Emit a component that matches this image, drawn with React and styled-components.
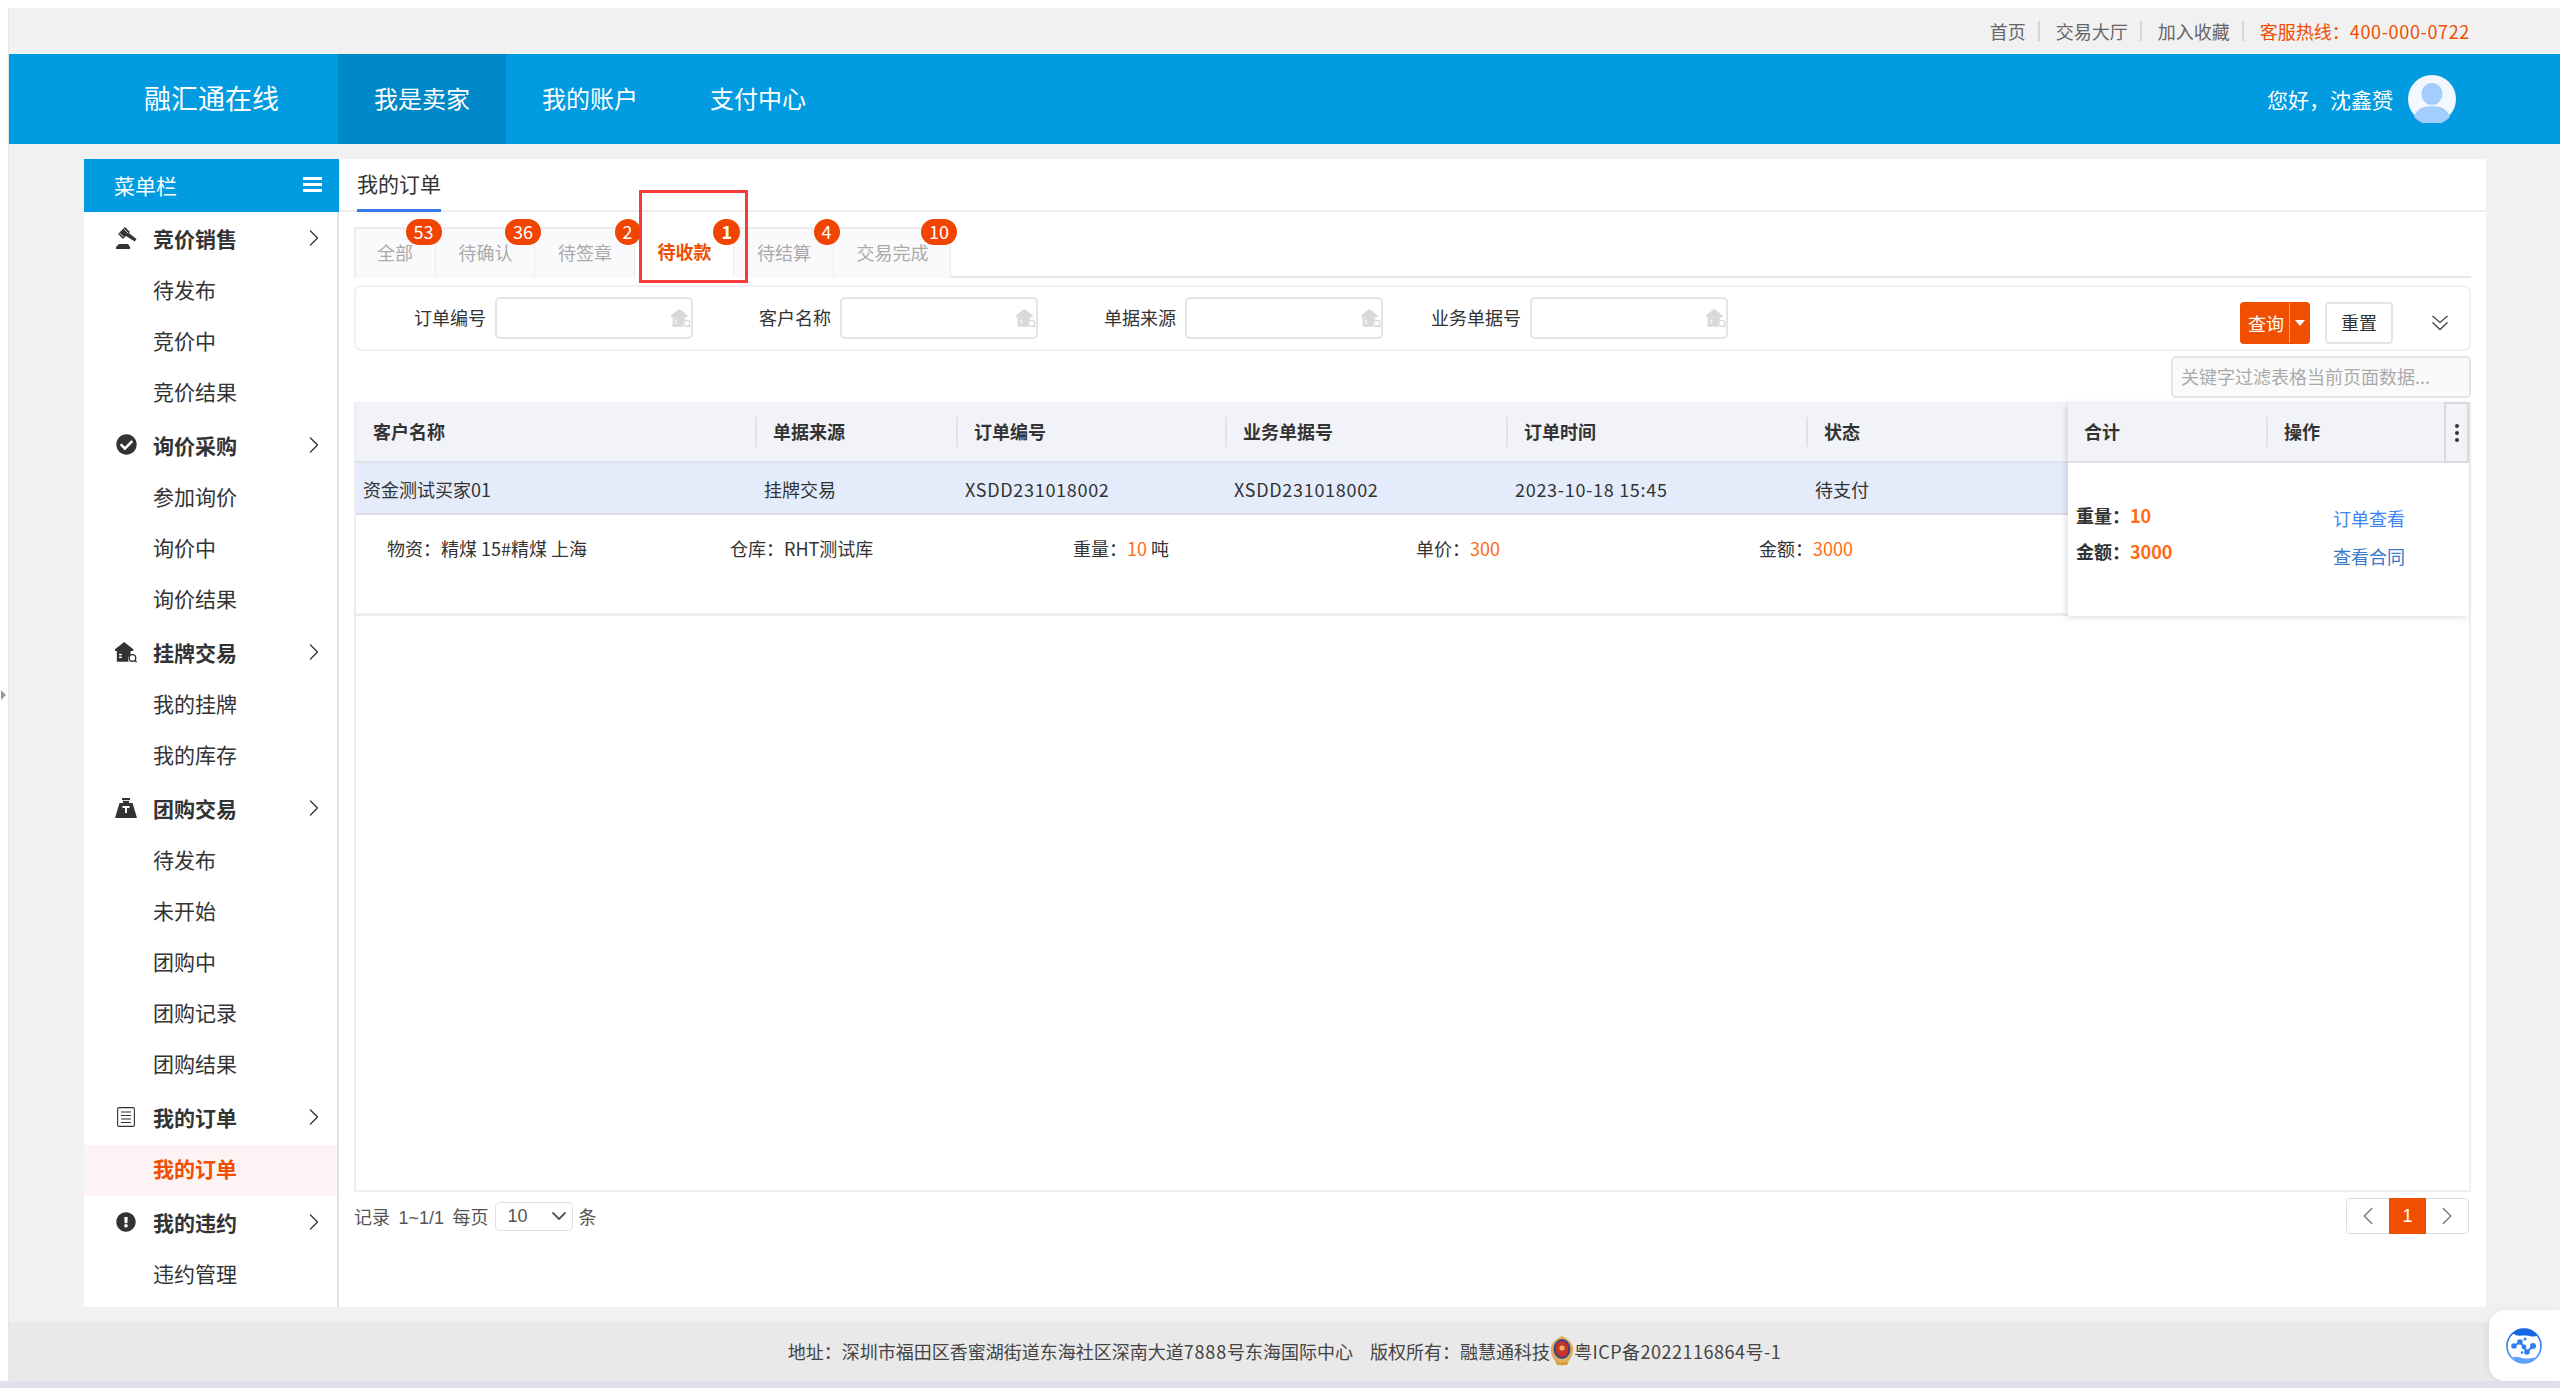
import React from "react";
import styled, { createGlobalStyle } from "styled-components";
import { FaCheckCircle, FaExclamationCircle } from "react-icons/fa";
import { ChevronRight, ChevronLeft, ChevronDown } from "lucide-react";

const GlobalStyle = createGlobalStyle`
  html, body {
    margin: 0;
    padding: 0;
    background: #fff;
    overflow: hidden;
  }
  body {
    font-family: "Noto Sans CJK SC", "Liberation Sans", sans-serif;
    font-size: 18px;
    color: #333;
  }
  * { box-sizing: border-box; }
`;

const Page = styled.div`
  position: relative;
  width: 2560px;
  height: 1388px;
  padding: 8px 0 0 8px;
  background: #fff;
  overflow: hidden;
`;

const Shell = styled.div`
  height: 1373px;
  background: #f1f1f1;
  border-left: 1px solid #e6e6e6;
  display: flex;
  flex-direction: column;
`;

const BottomStrip = styled.div`
  height: 7px;
  margin-left: -8px;
  background: #dfe1ec;
`;

const EdgeArrow = styled.span`
  position: absolute;
  left: 1px;
  top: 690px;
  border-left: 5px solid #999;
  border-top: 5px solid transparent;
  border-bottom: 5px solid transparent;
`;

const TopBar = styled.div`
  height: 46px;
  padding-right: 90px;
  display: flex;
  align-items: center;
  justify-content: flex-end;
  color: #666;
`;

const TopLink = styled.span`
  line-height: 20px;
  padding-right: 12px;
  margin-right: 16px;
  border-right: 2px solid #d4d4d4;
`;

const Hotline = styled.span`
  color: #f04e00;
`;

const Wide = styled.span`
  letter-spacing: ${(p) => p.$gap || "0.65px"};
`;

const Header = styled.header`
  height: 90px;
  background: #009be1;
  display: flex;
  align-items: stretch;
  color: #fff;
  padding-right: 104px;
`;

const Logo = styled.div`
  width: 329px;
  padding: 0 0 3px 135px;
  font-size: 27px;
  display: flex;
  align-items: center;
`;

const NavItem = styled.div`
  padding: 0 36px 3px;
  font-size: 24px;
  display: flex;
  align-items: center;
  background: ${(p) => (p.$active ? "#0089c8" : "transparent")};
`;

const UserBox = styled.div`
  margin-left: auto;
  display: flex;
  align-items: center;
  gap: 15px;
  font-size: 21px;
`;

const Workspace = styled.div`
  width: 2402px;
  height: 1148px;
  margin: 15px 0 15px 75px;
  display: flex;
`;

const Sidebar = styled.aside`
  width: 255px;
  flex: none;
  background: #fff;
  border-right: 2px solid #e2e2e2;
`;

const SidebarTitle = styled.div`
  height: 53px;
  margin-right: -2px;
  background: #009be1;
  color: #fff;
  font-size: 21px;
  padding: 0 17px 2px 30px;
  display: flex;
  align-items: center;
  justify-content: space-between;
`;

const Burger = styled.span`
  width: 19px;
  height: 15px;
  border-top: 3px solid #fff;
  border-bottom: 3px solid #fff;
  position: relative;
  &::after {
    content: "";
    position: absolute;
    left: 0;
    right: 0;
    top: 3px;
    height: 3px;
    background: #fff;
  }
`;

const GroupRow = styled.div`
  height: 54px;
  padding: 0 9px 3px 31px;
  display: flex;
  align-items: center;
  font-size: 21px;
  font-weight: 700;
  color: #333;
`;

const GroupIcon = styled.span`
  width: 22px;
  height: 24px;
  margin-right: 16px;
  display: flex;
  align-items: center;
  justify-content: center;
  color: #333;
`;

const GroupLabel = styled.span`
  flex: 1;
`;

const ChildRow = styled.div`
  height: 51px;
  padding: 0 0 5px 69px;
  display: flex;
  align-items: center;
  font-size: 21px;
  font-weight: ${(p) => (p.$active ? 700 : 400)};
  color: ${(p) => (p.$active ? "#f04e00" : "#333")};
  background: ${(p) => (p.$active ? "#fdf2f4" : "transparent")};
`;

const Content = styled.main`
  flex: 1;
  background: #fff;
  min-width: 0;
`;

const TitleBar = styled.div`
  height: 53px;
  padding-left: 18px;
  border-bottom: 2px solid #eee;
  display: flex;
`;

const PageTitle = styled.div`
  height: 53px;
  font-size: 21px;
  line-height: 48px;
  color: #333;
  border-bottom: 3px solid #3b78f0;
`;

const ContentBody = styled.div`
  padding: 0 15px;
`;

const TabStrip = styled.div`
  position: relative;
  margin-top: 15px;
  height: 51px;
  display: flex;
  border-bottom: 2px solid #e8e8ec;
`;

const Tab = styled.div`
  position: relative;
  height: 51px;
  padding: 0 21.5px 4px ${(p) => (p.$first ? "21px" : "23px")};
  display: flex;
  align-items: center;
  border-top: 2px solid #ececee;
  border-right: 1px solid #ececee;
  border-left: ${(p) => (p.$first ? "2px solid #ececee" : "none")};
  background: ${(p) => (p.$active ? "#fff" : "#fafafc")};
  color: ${(p) => (p.$active ? "#f04e00" : "#aaa")};
  font-weight: ${(p) => (p.$active ? 700 : 400)};
  ${(p) => p.$active && "border-bottom: 2px solid #fff; border-top-color: #fff;"}
`;

const Badge = styled.span`
  position: absolute;
  top: -10px;
  right: -7px;
  z-index: 2;
  height: 26px;
  min-width: 26px;
  padding: 0 8px;
  border-radius: 13px;
  background: #f04400;
  color: #fff;
  font-size: 18px;
  line-height: 25px;
  text-align: center;
`;

const Annotation = styled.div`
  position: absolute;
  left: 285px;
  top: -37px;
  width: 109px;
  height: 93px;
  border: 3px solid #f83a3a;
  z-index: 3;
`;

const FilterPanel = styled.div`
  margin-top: 7px;
  height: 66px;
  padding-left: 58px;
  padding-right: 20px;
  border: 2px solid #f0f0f0;
  border-radius: 7px;
  display: flex;
  align-items: center;
  gap: 66px;
`;

const FilterItem = styled.label`
  display: flex;
  align-items: center;
  gap: 9px;
`;

const FilterLabel = styled.span`
  width: 72px;
  padding-bottom: 2px;
  display: flex;
  justify-content: flex-end;
  white-space: nowrap;
`;

const FilterBox = styled.div`
  width: 198px;
  height: 42px;
  border: 2px solid #e2e4ec;
  border-radius: 5px;
  padding-right: 0;
  display: flex;
  align-items: center;
  justify-content: flex-end;
`;

const ButtonGroup = styled.div`
  margin-left: auto;
  margin-top: 10px;
  display: flex;
  align-items: center;
  gap: 15px;
`;

const QueryButton = styled.div`
  width: 70px;
  height: 42px;
  border-radius: 4px;
  background: #f04e00;
  color: #fff;
  display: flex;
  align-items: center;
`;

const QueryText = styled.span`
  width: 50px;
  padding-left: 3px;
  text-align: center;
  border-right: 1px solid #f8a27a;
  line-height: 40px;
`;

const Caret = styled.span`
  margin-left: 5px;
  border-top: 6px solid #fff;
  border-left: 5px solid transparent;
  border-right: 5px solid transparent;
`;

const ResetButton = styled.div`
  width: 68px;
  height: 42px;
  padding-bottom: 2px;
  border: 2px solid #e2e4ec;
  border-radius: 4px;
  display: flex;
  align-items: center;
  justify-content: center;
`;

const MoreIcon = styled.svg`
  margin-left: 23px;
`;

const SearchRow = styled.div`
  margin-top: 5px;
  display: flex;
  justify-content: flex-end;
`;

const SearchBox = styled.div`
  width: 300px;
  height: 42px;
  padding-left: 8px;
  background: #fafafa;
  border: 2px solid #e2e4ec;
  border-radius: 5px;
  color: #aaa;
  line-height: 36px;
  white-space: nowrap;
  overflow: hidden;
`;

const TableBox = styled.div`
  margin-top: 4px;
  height: 790px;
  display: flex;
  align-items: flex-start;
  border-left: 2px solid #eee;
  border-right: 2px solid #eee;
  border-bottom: 2px solid #eee;
`;

const MainTable = styled.div`
  width: 1712px;
  flex: none;
`;

const HeadRow = styled.div`
  height: 61px;
  background: #f2f3f8;
  border-top: 1px solid #eee;
  border-bottom: 2px solid #dfe1ea;
  display: grid;
  grid-template-columns: ${(p) => p.$cols};
  align-items: center;
`;

const HeadCell = styled.div`
  height: 30px;
  line-height: 28px;
  padding-left: ${(p) => (p.$first ? "17px" : "16px")};
  font-weight: 700;
  color: #333;
  border-right: ${(p) => (p.$last ? "none" : "2px solid #dfe1e6")};
`;

const DataRow = styled.div`
  height: 52px;
  padding-top: 1px;
  background: #e4ecfb;
  border-bottom: 2px solid #dcdfe9;
  display: grid;
  grid-template-columns: ${(p) => p.$cols};
  align-items: center;
`;

const DataCell = styled.div`
  padding-left: 7px;
  letter-spacing: ${(p) => (p.$code ? "0.7px" : "0")};
`;

const DetailRow = styled.div`
  height: 101px;
  padding: 20px 0 0 31px;
  border-bottom: 3px solid #eee;
  display: grid;
  grid-template-columns: repeat(5, 343px);
  align-items: start;
`;

const Orange = styled.span`
  color: #ff6a13;
  font-weight: ${(p) => (p.$bold ? 700 : 400)};
`;

const FrozenPanel = styled.div`
  flex: 1;
  position: relative;
  background: #fff;
  box-shadow: -2px 2px 6px rgba(0, 0, 0, 0.12);
`;

const KebabCell = styled.div`
  position: absolute;
  right: 0;
  top: 0;
  width: 25px;
  height: 61px;
  border: 2px solid #d8dae0;
  background: #f2f3f8;
  display: flex;
  flex-direction: column;
  align-items: center;
  justify-content: center;
  gap: 3px;
`;

const KebabDot = styled.i`
  width: 4px;
  height: 4px;
  border-radius: 50%;
  background: #333;
`;

const FrozenBody = styled.div`
  height: 153px;
  display: grid;
  grid-template-columns: 200px 1fr;
  align-items: center;
`;

const TotalCell = styled.div`
  padding: 0 0 14px 8px;
  font-weight: 700;
  line-height: 36px;
`;

const ActionCell = styled.div`
  padding-left: 65px;
  padding-bottom: 6px;
  line-height: 38px;
`;

const ActionLink = styled.div`
  color: ${(p) => p.$color};
`;

const PagerRow = styled.div`
  height: 45px;
  padding: 2px 2px 0 0;
  display: flex;
  align-items: center;
  justify-content: space-between;
`;

const PagerInfo = styled.div`
  display: flex;
  align-items: center;
  gap: 6px;
  color: #555;
  word-spacing: 3.5px;
  font-family: "Liberation Sans", "Noto Sans CJK SC", sans-serif;
`;

const PageSize = styled.div`
  width: 78px;
  height: 29px;
  margin-top: 1px;
  padding: 0 1px 0 12px;
  border: 1px solid #dcdfe9;
  border-radius: 5px;
  display: flex;
  align-items: center;
  justify-content: space-between;
`;

const Pager = styled.div`
  width: 123px;
  height: 36px;
  margin-top: 1px;
  border: 1px solid #ddd;
  border-radius: 4px;
  display: flex;
  align-items: stretch;
  justify-content: space-between;
`;

const PagerArrow = styled.span`
  width: 42px;
  display: flex;
  align-items: center;
  justify-content: center;
  color: #777;
`;

const PagerCurrent = styled.span`
  width: 37px;
  margin: -1px 0;
  background: #f04e00;
  color: #fff;
  font-family: "Liberation Sans", sans-serif;
  display: flex;
  align-items: center;
  justify-content: center;
`;

const Footer = styled.footer`
  height: 59px;
  padding-bottom: 2px;
  background: #e9e9e9;
  color: #444;
  display: flex;
  align-items: center;
  justify-content: center;
`;

const FooterBlock = styled.span`
  margin-right: 17px;
`;

const FloatBadge = styled.div`
  position: absolute;
  right: 0;
  top: 1310px;
  width: 71px;
  height: 71px;
  background: #fff;
  border-radius: 16px 0 0 16px;
  box-shadow: -2px 0 6px rgba(0, 0, 0, 0.06);
  padding-left: 17px;
  display: flex;
  align-items: center;
`;

const Avatar = () => (
  <svg width="48" height="48" viewBox="0 0 48 48">
    <circle cx="24" cy="24" r="24" fill="#f3f7fe" />
    <ellipse cx="24" cy="19" rx="10.5" ry="11" fill="#a2cdfd" />
    <path d="M6 42c2-8 10-11 18-11s16 3 18 11a24 24 0 0 1-36 0z" fill="#a2cdfd" />
  </svg>
);

const GavelIcon = () => (
  <svg width="21" height="22" viewBox="0 0 21 22" fill="#333">
    <path d="M9 0l5 5-7 7-5-5z" />
    <path d="M11.200 4.800 20.500 12l-1.700 2.500-10-6.200z" />
    <path d="M3 17h9l2 3v2H0v-2z" />
    <path d="M7.800 1.800l4.400 4.400M3.500 6l4.400 4.400" stroke="#fff" strokeWidth="0.8" />
  </svg>
);

const HouseSearch = ({ size = 22, color = "#333" }) => (
  <svg width={size} height={size} viewBox="0 0 24 24">
    <path d="M10 1 20 9v2H0V9z" fill={color} />
    <path d="M2 11h15v3.5a6 6 0 0 0-2 8H2z" fill={color} />
    <rect x="4.5" y="14" width="3" height="1.6" fill="#fff" />
    <rect x="4.5" y="17" width="3" height="1.6" fill="#fff" />
    <circle cx="19" cy="18.5" r="3.6" fill="none" stroke={color} strokeWidth="1.5" />
    <path d="m21.5 21 2 2" stroke={color} strokeWidth="1.5" />
  </svg>
);

const WeightIcon = () => (
  <svg width="22" height="20" viewBox="0 0 22 20">
    <rect x="7" y="0" width="8" height="2.2" fill="#333" />
    <path d="M8 3h6v2h3.5L22 20H0L4.5 5H8z" fill="#333" />
    <path d="M7.500 8h7v2h-2.500v5h-2v-5H7.500z" fill="#fff" />
  </svg>
);

const ListIcon = () => (
  <svg width="18" height="20" viewBox="0 0 18 20" fill="none" stroke="#333" strokeWidth="1.1">
    <rect x="0.6" y="0.6" width="16.8" height="18.8" rx="1.5" />
    <path d="M4 5h10M4 8.500h10M4 12h10M4 15.500h10" />
  </svg>
);

const PoliceEmblem = () => (
  <svg width="24" height="30" viewBox="0 0 24 30">
    <path d="M12 0c2 1 9 4 11 11 1 8-3 15-11 19C4 26 0 19 1 11 3 4 10 1 12 0z" fill="#e0ad5a" />
    <ellipse cx="12" cy="13" rx="8.5" ry="10" fill="#30468c" />
    <ellipse cx="12" cy="13" rx="6.5" ry="8" fill="#c8342a" />
    <circle cx="12" cy="12" r="2.6" fill="#e7bd5c" />
    <path d="M5 25c4 2 10 2 14 0l-2 4H7z" fill="#d99a3d" />
  </svg>
);

const AssistLogo = () => (
  <svg width="36" height="36" viewBox="0 0 36 36">
    <defs>
      <linearGradient id="assistRing" x1="0" y1="0" x2="0" y2="1">
        <stop offset="0" stopColor="#0f5fe0" />
        <stop offset="1" stopColor="#5aa2fa" />
      </linearGradient>
    </defs>
    <circle cx="18" cy="18" r="17" fill="#fff" stroke="url(#assistRing)" strokeWidth="1.6" />
    <path d="M7 5.500C12 0 24-1 31 7c-3 3-6 1-10 .5C16 7 11 9 7 5.500z" fill="#1466e6" />
    <path d="M6 30c4-3 8 0 13 .5 4 .4 8-1 10.500-1C25 37 12 37 6 30z" fill="#5aa2fa" />
    <g fill="#2f7ff0">
      <circle cx="8" cy="18" r="2.800" />
      <circle cx="14" cy="14" r="2.800" />
      <circle cx="18" cy="19" r="2.400" />
      <circle cx="21" cy="24" r="2.800" />
      <circle cx="27" cy="18" r="3" />
      <circle cx="19" cy="11" r="1.500" />
      <circle cx="16" cy="24.500" r="1.300" />
    </g>
    <path d="M8 18l6-4 4 5 3 5 6-6" fill="none" stroke="#2f7ff0" strokeWidth="2" />
  </svg>
);

const menu = [
  { title: "竞价销售", icon: <GavelIcon />, items: ["待发布", "竞价中", "竞价结果"] },
  { title: "询价采购", icon: <FaCheckCircle size={21} />, items: ["参加询价", "询价中", "询价结果"] },
  { title: "挂牌交易", icon: <HouseSearch />, items: ["我的挂牌", "我的库存"] },
  { title: "团购交易", icon: <WeightIcon />, items: ["待发布", "未开始", "团购中", "团购记录", "团购结果"] },
  { title: "我的订单", icon: <ListIcon />, items: ["我的订单"], activeItem: "我的订单" },
  { title: "我的违约", icon: <FaExclamationCircle size={20} />, items: ["违约管理"] },
];

const tabs = [
  { label: "全部", count: 53 },
  { label: "待确认", count: 36 },
  { label: "待签章", count: 2 },
  { label: "待收款", count: 1, active: true },
  { label: "待结算", count: 4 },
  { label: "交易完成", count: 10 },
];

const filters = ["订单编号", "客户名称", "单据来源", "业务单据号"];
const mainCols = "401px 201px 269px 281px 300px 260px";
const headers = ["客户名称", "单据来源", "订单编号", "业务单据号", "订单时间", "状态"];
const rowCells = [
  { text: "资金测试买家01" },
  { text: "挂牌交易" },
  { text: "XSDD231018002", code: true },
  { text: "XSDD231018002", code: true },
  { text: "2023-10-18 15:45", code: true },
  { text: "待支付" },
];

const App = () => (
  <Page>
    <GlobalStyle />
    <EdgeArrow />
    <Shell>
      <TopBar>
        <TopLink>首页</TopLink>
        <TopLink>交易大厅</TopLink>
        <TopLink>加入收藏</TopLink>
        <Hotline>
          客服热线：<Wide>400-000-0722</Wide>
        </Hotline>
      </TopBar>
      <Header>
        <Logo>融汇通在线</Logo>
        <NavItem $active>我是卖家</NavItem>
        <NavItem>我的账户</NavItem>
        <NavItem>支付中心</NavItem>
        <UserBox>
          您好，沈鑫赟
          <Avatar />
        </UserBox>
      </Header>
      <Workspace>
        <Sidebar>
          <SidebarTitle>
            菜单栏
            <Burger />
          </SidebarTitle>
          {menu.map((group) => (
            <div key={group.title}>
              <GroupRow>
                <GroupIcon>{group.icon}</GroupIcon>
                <GroupLabel>{group.title}</GroupLabel>
                <ChevronRight size={28} strokeWidth={1.1} color="#333" />
              </GroupRow>
              {group.items.map((item) => (
                <ChildRow key={item} $active={item === group.activeItem}>
                  {item}
                </ChildRow>
              ))}
            </div>
          ))}
        </Sidebar>
        <Content>
          <TitleBar>
            <PageTitle>我的订单</PageTitle>
          </TitleBar>
          <ContentBody>
            <TabStrip>
              {tabs.map((tab, i) => (
                <Tab key={tab.label} $active={tab.active} $first={i === 0}>
                  {tab.label}
                  <Badge>{tab.count}</Badge>
                </Tab>
              ))}
              <Annotation />
            </TabStrip>
            <FilterPanel>
              {filters.map((name) => (
                <FilterItem key={name}>
                  <FilterLabel>{name}</FilterLabel>
                  <FilterBox>
                    <HouseSearch size={20} color="#d8d8d8" />
                  </FilterBox>
                </FilterItem>
              ))}
              <ButtonGroup>
                <QueryButton>
                  <QueryText>查询</QueryText>
                  <Caret />
                </QueryButton>
                <ResetButton>重置</ResetButton>
                <MoreIcon width="18" height="16" viewBox="0 0 18 16" fill="none" stroke="#444" strokeWidth="1.3">
                  <path d="M1.500 1l7.500 6.500L16.500 1M1.500 7.500 9 14.500l7.500-7" />
                </MoreIcon>
              </ButtonGroup>
            </FilterPanel>
            <SearchRow>
              <SearchBox>关键字过滤表格当前页面数据...</SearchBox>
            </SearchRow>
            <TableBox>
              <MainTable>
                <HeadRow $cols={mainCols}>
                  {headers.map((h, i) => (
                    <HeadCell key={h} $first={i === 0} $last={i === headers.length - 1}>
                      {h}
                    </HeadCell>
                  ))}
                </HeadRow>
                <DataRow $cols={mainCols}>
                  {rowCells.map((c, i) => (
                    <DataCell key={i} $code={c.code}>
                      {c.text}
                    </DataCell>
                  ))}
                </DataRow>
                <DetailRow>
                  <div>物资：精煤 15#精煤 上海</div>
                  <div>仓库：RHT测试库</div>
                  <div>
                    重量：<Orange>10</Orange> 吨
                  </div>
                  <div>
                    单价：<Orange>300</Orange>
                  </div>
                  <div>
                    金额：<Orange>3000</Orange>
                  </div>
                </DetailRow>
              </MainTable>
              <FrozenPanel>
                <HeadRow $cols="200px 1fr">
                  <HeadCell>合计</HeadCell>
                  <HeadCell $last>操作</HeadCell>
                </HeadRow>
                <KebabCell>
                  <KebabDot />
                  <KebabDot />
                  <KebabDot />
                </KebabCell>
                <FrozenBody>
                  <TotalCell>
                    <div>
                      重量：<Orange $bold>10</Orange>
                    </div>
                    <div>
                      金额：<Orange $bold>3000</Orange>
                    </div>
                  </TotalCell>
                  <ActionCell>
                    <ActionLink $color="#3d85f5">订单查看</ActionLink>
                    <ActionLink $color="#3a78c8">查看合同</ActionLink>
                  </ActionCell>
                </FrozenBody>
              </FrozenPanel>
            </TableBox>
            <PagerRow>
              <PagerInfo>
                记录 1~1/1 每页
                <PageSize>
                  10
                  <ChevronDown size={24} strokeWidth={1.8} color="#555" />
                </PageSize>
                条
              </PagerInfo>
              <Pager>
                <PagerArrow>
                  <ChevronLeft size={30} strokeWidth={1.1} />
                </PagerArrow>
                <PagerCurrent>1</PagerCurrent>
                <PagerArrow>
                  <ChevronRight size={30} strokeWidth={1.1} />
                </PagerArrow>
              </Pager>
            </PagerRow>
          </ContentBody>
        </Content>
      </Workspace>
      <Footer>
        <FooterBlock>
          地址：深圳市福田区香蜜湖街道东海社区深南大道<Wide $gap="0.8px">7888</Wide>号东海国际中心
        </FooterBlock>
        版权所有：融慧通科技
        <PoliceEmblem />
        <Wide $gap="0.5px">粤ICP备2022116864号-1</Wide>
      </Footer>
    </Shell>
    <BottomStrip />
    <FloatBadge>
      <AssistLogo />
    </FloatBadge>
  </Page>
);

export default App;
